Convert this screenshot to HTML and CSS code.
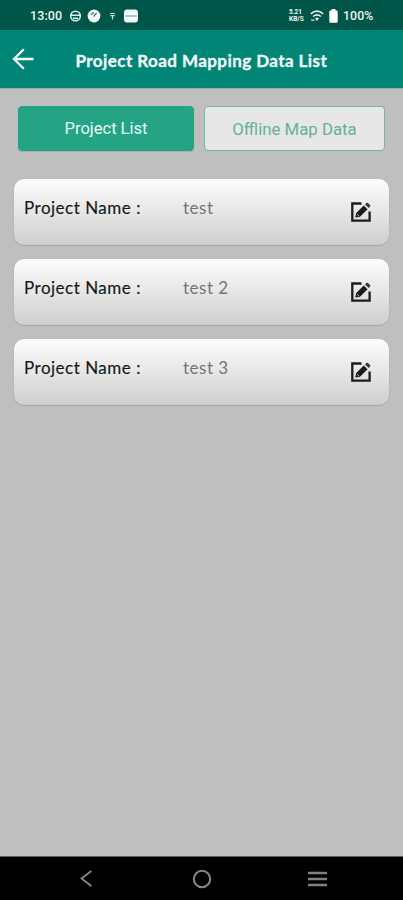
FILE: index.html
```
<!DOCTYPE html>
<html lang="en">
<head>
<meta charset="utf-8">
<title>Project Road Mapping Data List</title>
<link rel="stylesheet" href="styles.css">
</head>
<body>
<svg class="defs" width="0" height="0" aria-hidden="true">
  <symbol id="edit" viewBox="0 0 20 20">
    <path d="M10.5 1.5H1.3V18.6H18.6V9.5" fill="none" stroke="#1c1c1c" stroke-width="2.3"/>
    <path d="M4.3 15.6L5.2 11L12.8 3.4L16.6 7.2L9 14.7Z" fill="#1c1c1c"/>
    <path d="M14 2.4L15.4 1Q16.2.3 17 1L19 3Q19.7 3.8 19 4.6L17.7 6Z" fill="#3a3a3a"/>
    <path d="M6.2 12.2L8 14" stroke="#ddd" stroke-width=".8"/>
  </symbol>
</svg>
<div class="screen">
  <div class="status">
    <span class="clock">13:00</span>
    <svg class="notices" width="70" height="16" viewBox="0 0 70 16">
      <g fill="none" stroke="#e5f1ee" stroke-width="1.5"><circle cx="6.5" cy="8" r="4.8"/><path d="M1 7.2H12M4 10.2H9"/></g>
      <circle cx="25" cy="8" r="6.4" fill="#f4faf8"/>
      <path d="M22.3 6.8A3 3 0 0 1 25 5M24.6 8.6L27.6 4.8" fill="none" stroke="#31796c" stroke-width="1.3"/>
      <path d="M41 5.5H46M41.3 7.7H45.7M43.5 8V11.5" stroke="#c8dfda" stroke-width="1.2"/>
      <rect x="55" y="1.5" width="14" height="13" rx="3" fill="#f4faf8"/>
      <path d="M56 8H68" stroke="#5d9187" stroke-width="1"/>
    </svg>
    <span class="speed"><b>5.21</b><b>KB/S</b></span>
    <svg class="wifi" width="14" height="14" viewBox="0 0 14 14">
      <g fill="none" stroke="#e5f1ee" stroke-width="1.6"><path d="M.8 4.8Q7 -.6 13.2 4.8M3.1 7.5Q7 4.2 10.9 7.5"/></g>
      <path d="M5 9.2Q7 7.7 9 9.2L7 12Z" fill="#e5f1ee"/><path d="M1 11.2H4.5" stroke="#a7cbc3" stroke-width="1.5"/>
    </svg>
    <svg class="battery" width="9" height="14" viewBox="0 0 9 14"><path d="M2.6 0H6.4V1.6H7.6Q8.7 1.6 8.7 2.8V12.5Q8.7 13.7 7.6 13.7H1.4Q.3 13.7.3 12.5V2.8Q.3 1.6 1.4 1.6H2.6Z" fill="#fff"/></svg>
    <span class="percent">100%</span>
  </div>
  <header class="appbar">
    <svg class="back" width="22" height="22" viewBox="0 0 22 22"><path d="M21.5 11H2M11.8 1.2L2 11L11.8 20.8" fill="none" stroke="#f2faf8" stroke-width="2.3"/></svg>
    <h1>Project Road Mapping Data List</h1>
  </header>
  <main>
    <div class="tabs">
      <button class="tab active">Project List</button>
      <button class="tab">Offline Map Data</button>
    </div>
    <div class="cards">
      <div class="card"><span class="label">Project Name :</span><span class="value">test</span><svg class="edit"><use href="#edit"/></svg></div>
      <div class="card"><span class="label">Project Name :</span><span class="value">test 2</span><svg class="edit"><use href="#edit"/></svg></div>
      <div class="card"><span class="label">Project Name :</span><span class="value">test 3</span><svg class="edit"><use href="#edit"/></svg></div>
    </div>
  </main>
  <nav class="navbar">
    <svg width="12" height="17" viewBox="0 0 12 17"><path d="M11.3 1L1.5 8.5L11.3 16" fill="none" stroke="#858585" stroke-width="2"/></svg>
    <svg class="home" width="20" height="20" viewBox="0 0 20 20"><circle cx="10" cy="10" r="8.2" fill="none" stroke="#858585" stroke-width="2.1"/></svg>
    <svg width="19" height="16" viewBox="0 0 19 16"><path d="M0 2H19M0 8H19M0 14H19" stroke="#808080" stroke-width="2.4"/></svg>
  </nav>
</div>
</body>
</html>
```
FILE: styles.css
```
* { box-sizing: border-box; }
body { margin: 0; font-family: Roboto, sans-serif; }
.defs { display: block; }
svg { display: block; flex: none; }
.screen { width: 403px; height: 900px; display: flex; flex-direction: column; background: #bfbfbf; overflow: hidden; }
.status { height: 30px; flex: none; display: flex; align-items: center; background: #005549; color: #eef6f4; padding: 1px 0 0 30px; font-size: 12.5px; font-weight: 500; }
.clock { width: 39px; letter-spacing: .1px; }
.speed { margin-left: 150px; width: 16px; display: flex; flex-direction: column; font-size: 6.5px; line-height: 6.5px; white-space: nowrap; }
.wifi { margin-left: 5px; }
.battery { margin-left: 5px; }
.percent { margin-left: 5px; font-size: 12.3px; letter-spacing: .1px; }
.appbar { height: 59px; flex: none; display: flex; align-items: center; padding-left: 12px; background: #008576; border-bottom: 1px solid #8fb1ac; }
.appbar h1 { margin: 4px 0 0 41.5px; font: 700 17px/22px Lato, sans-serif; color: #f4fbfa; white-space: nowrap; letter-spacing: .43px; -webkit-text-stroke: .3px #f4fbfa; }
main { flex: 1; padding: 17px 14px 0 14px; }
.tabs { display: flex; gap: 10px; padding-left: 4px; }
.tab { width: 176px; height: 45px; padding: 0; border: 1px solid #72b5a4; border-radius: 4px; background: #e7e7e7; color: #66b09d; font: 400 16.8px Roboto, sans-serif; }
.tab + .tab { width: 181px; }
.tab.active { background: #24a484; border-color: #24a484; color: #eafaf6; font-size: 16.5px; box-shadow: 0 1px 1px #aaa; }
.cards { display: flex; flex-direction: column; gap: 14px; margin-top: 28px; }
.card { height: 66px; display: flex; padding: 18px 18px 0 10px; border-radius: 10px; background: linear-gradient(#fdfdfd, #e6e6e6 50%, #cecece); box-shadow: 0 1px 1px #a6a6a6, 0 0 1px #999; font: 400 17px/22px Lato, sans-serif; }
.label { width: 159px; color: #181818; letter-spacing: .5px; -webkit-text-stroke: .15px #181818; }
.value { flex: 1; color: #747474; letter-spacing: .5px; }
.edit { width: 20px; height: 20px; margin-top: 5px; }
.navbar { height: 44px; flex: none; display: flex; align-items: center; justify-content: space-between; background: #000; padding: 0 76px 0 80px; border-top: 1px solid #606060; }
.home { margin-left: 4px; }
```
